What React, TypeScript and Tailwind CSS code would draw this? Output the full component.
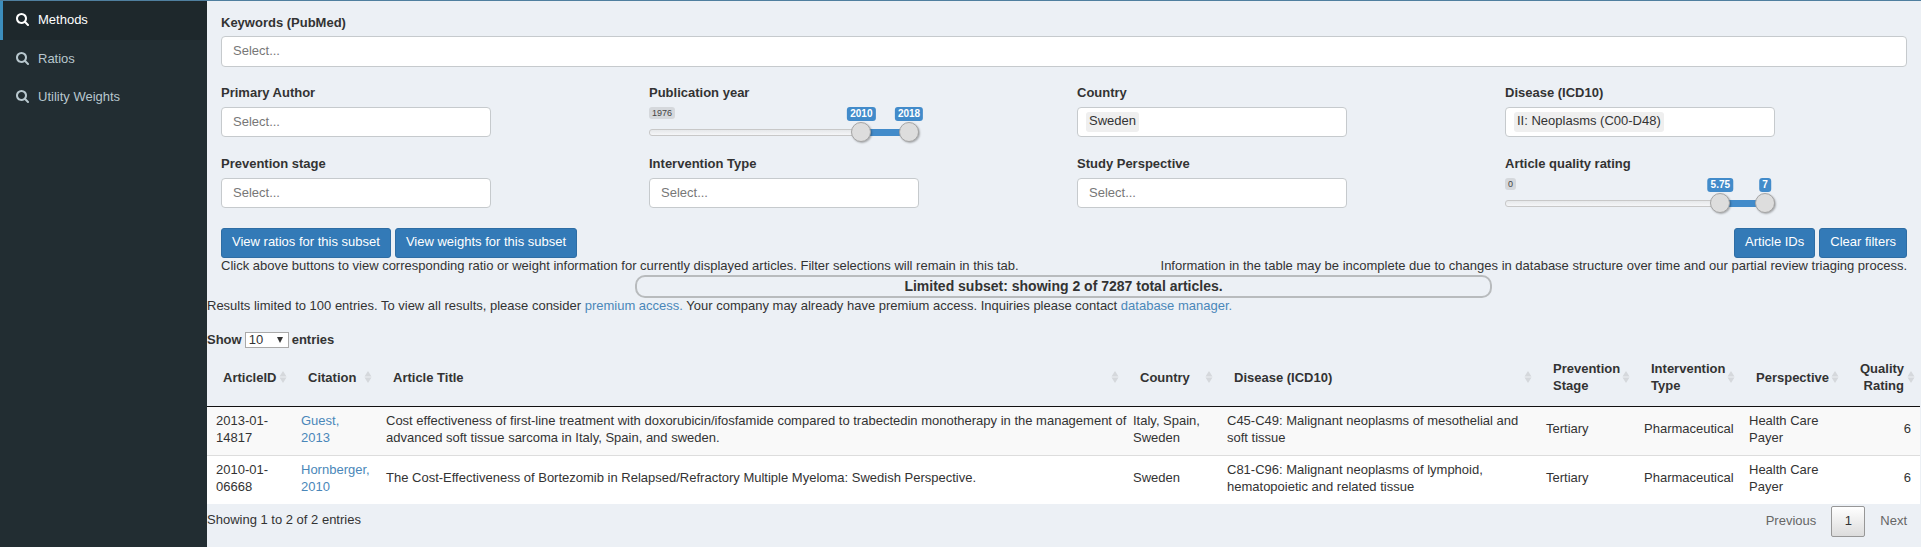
import { useState, type ReactNode } from "react";

function SearchIcon() {
  return (
    <svg viewBox="0 0 1664 1664" className="size-[13px] shrink-0 fill-current" aria-hidden="true">
      <path d="M1152 704q0-185-131.5-316.5T704 256 387.5 387.5 256 704t131.5 316.5T704 1152t316.5-131.5T1152 704zm512 832q0 52-38 90t-90 38q-54 0-90-38l-343-342q-179 124-399 124-143 0-273.5-55.5t-225-150-150-225T0 704t55.5-273.5 150-225 225-150T704 0t273.5 55.5 225 150 150 225T1408 704q0 220-124 399l343 343q37 37 37 90z" />
    </svg>
  );
}

function NavItem({ label, active = false }: { label: string; active?: boolean }) {
  return (
    <li>
      <a
        href="#"
        className={
          active
            ? "flex h-[39px] items-center gap-[9px] border-l-[3px] border-[#3c8dbc] bg-[#1e282c] pb-[2px] pl-[13px] text-white"
            : "flex h-[38px] items-center gap-[9px] border-l-[3px] border-transparent pb-[2px] pl-[13px] text-[#b8c7ce]"
        }
      >
        <SearchIcon />
        {label}
      </a>
    </li>
  );
}

function Field({ id, label, children }: { id: string; label: string; children: ReactNode }) {
  return (
    <div className="px-[14px]">
      <label htmlFor={id} className="mb-[6px] block font-bold">
        {label}
      </label>
      {children}
    </div>
  );
}

function SelectBox({ id, tag }: { id: string; tag?: string }) {
  return (
    <div className="flex h-[30px] w-[270px] items-center rounded-[4px] border border-[#c6cacd] bg-white px-2">
      {tag && <span className="mr-1 shrink-0 rounded-[3px] bg-[#efefef] px-[3px] pb-[2px] leading-[18px]">{tag}</span>}
      <input
        id={id}
        type="text"
        placeholder={tag ? undefined : "Select..."}
        className="w-full min-w-0 bg-transparent pb-[2px] pl-[3px] outline-none placeholder:text-[#777]"
      />
    </div>
  );
}

const thumbInput =
  "pointer-events-none absolute inset-x-0 top-[15px] h-5 w-full appearance-none bg-transparent [&::-webkit-slider-thumb]:pointer-events-auto [&::-webkit-slider-thumb]:size-5 [&::-webkit-slider-thumb]:appearance-none [&::-webkit-slider-thumb]:rounded-full [&::-webkit-slider-thumb]:border [&::-webkit-slider-thumb]:border-[#a6a6a6] [&::-webkit-slider-thumb]:bg-[#dddddd] [&::-webkit-slider-thumb]:shadow-[1px_1px_2px_rgba(0,0,0,0.3)]";
const valueBadge =
  "absolute top-0 -translate-x-1/2 rounded-[3px] bg-[#428bca] px-[3px] text-[10px] leading-[14px] font-bold text-white";

function RangeSlider(props: { id: string; label: string; min: number; max: number; step: number; from: number; to: number }) {
  const { id, label, min, max, step } = props;
  const [from, setFrom] = useState(props.from);
  const [to, setTo] = useState(props.to);
  const at = (v: number) => {
    const r = (v - min) / (max - min);
    return `calc(10px + (100% - 20px) * ${r})`;
  };
  const span = (to - from) / (max - min);
  return (
    <div className="relative h-[30px] w-[270px]">
      <span className="absolute top-0 left-0 rounded-[3px] bg-[#d5d8dc] px-[3px] text-[9px] leading-3 text-[#444]">{min}</span>
      <span className={valueBadge} style={{ left: at(from) }}>{from}</span>
      <span className={valueBadge} style={{ left: at(to) }}>{to}</span>
      <div className="absolute inset-x-0 top-[22px] h-[7px] rounded-[3px] border border-[#c8c8c8] bg-gradient-to-b from-[#e6e8ea] to-[#f5f6f8]" />
      <div
        className="absolute top-[22px] h-[7px] bg-[#428bca]"
        style={{ left: at(from), width: `calc((100% - 20px) * ${span})` }}
      />
      <input
        id={id}
        type="range"
        aria-label={`${label} minimum`}
        min={min}
        max={max}
        step={step}
        value={from}
        onChange={(e) => setFrom(Math.min(Number(e.target.value), to))}
        className={thumbInput}
      />
      <input
        type="range"
        aria-label={`${label} maximum`}
        min={min}
        max={max}
        step={step}
        value={to}
        onChange={(e) => setTo(Math.max(Number(e.target.value), from))}
        className={thumbInput}
      />
    </div>
  );
}

function ActionButton({ children }: { children: ReactNode }) {
  return (
    <button type="button" className="h-[30px] rounded-[3px] border border-[#2e6da4] bg-[#337ab7] px-[10px] pb-1 text-white">
      {children}
    </button>
  );
}

function SortIcon() {
  return (
    <svg viewBox="0 0 8 12" className="absolute top-1/2 right-[5px] h-3 w-2 -translate-y-1/2 fill-[#d5d8dc]" aria-hidden="true">
      <path d="M4 0 7.5 5.5h-7zM4 12 .5 6.5h7z" />
    </svg>
  );
}

const columns: { title: string; width: string; right?: boolean }[] = [
  { title: "ArticleID", width: "w-[85px]" },
  { title: "Citation", width: "w-[85px]" },
  { title: "Article Title", width: "" },
  { title: "Country", width: "w-[94px]" },
  { title: "Disease (ICD10)", width: "w-[319px]" },
  { title: "Prevention Stage", width: "w-[98px]" },
  { title: "Intervention Type", width: "w-[105px]" },
  { title: "Perspective", width: "w-[104px]" },
  { title: "Quality Rating", width: "w-[76px]", right: true },
];

const rows = [
  {
    id: "2013-01-14817",
    citation: "Guest, 2013",
    title:
      "Cost effectiveness of first-line treatment with doxorubicin/ifosfamide compared to trabectedin monotherapy in the management of\nadvanced soft tissue sarcoma in Italy, Spain, and sweden.",
    country: "Italy, Spain, Sweden",
    disease: "C45-C49: Malignant neoplasms of mesothelial and soft tissue",
    rating: 6,
  },
  {
    id: "2010-01-06668",
    citation: "Hornberger, 2010",
    title: "The Cost-Effectiveness of Bortezomib in Relapsed/Refractory Multiple Myeloma: Swedish Perspective.",
    country: "Sweden",
    disease: "C81-C96: Malignant neoplasms of lymphoid, hematopoietic and related tissue",
    rating: 6,
  },
];

function ArticleTable() {
  return (
    <table className="w-full table-fixed border-collapse">
      <thead>
        <tr className="h-[57px] border-b border-[#111]">
          {columns.map((c) => (
            <th
              key={c.title}
              scope="col"
              className={`relative pr-4 pl-4 ${c.right ? "text-right" : "text-left"} ${c.width}`}
            >
              {c.title}
              <SortIcon />
            </th>
          ))}
        </tr>
      </thead>
      <tbody>
        {rows.map((r) => (
          <tr key={r.id} className="border-t border-[#ddd] bg-white first:border-t-0 odd:bg-[#f9f9f9] [&>td]:px-[9px] [&>td]:pt-[5px] [&>td]:pb-[9px]">
            <td>{r.id}</td>
            <td>
              <a href="#" className="text-[#4a87b9]">{r.citation}</a>
            </td>
            <td className="whitespace-pre">{r.title}</td>
            <td>{r.country}</td>
            <td>{r.disease}</td>
            <td>Tertiary</td>
            <td>Pharmaceutical</td>
            <td>Health Care Payer</td>
            <td className="text-right">{r.rating}</td>
          </tr>
        ))}
      </tbody>
    </table>
  );
}

export default function App() {
  return (
    <div className="flex min-h-screen border-t border-[#4f7f9f] bg-[#222d32] font-['Liberation_Sans',Arial,sans-serif] text-[13px] leading-[17px] text-[#333]">
      <nav className="w-[207px] shrink-0">
        <ul>
          <NavItem label="Methods" active />
          <NavItem label="Ratios" />
          <NavItem label="Utility Weights" />
        </ul>
      </nav>
      <main className="min-w-0 flex-1 bg-[#ecf0f5] pt-[13px] pr-px">
        <div className="pr-[13px] pl-[14px]">
          <label htmlFor="keywords" className="mb-[5px] block font-bold">
            Keywords (PubMed)
          </label>
          <input
            id="keywords"
            type="text"
            placeholder="Select..."
            className="block h-[31px] w-full rounded-[4px] border border-[#c6cacd] bg-white px-[11px] pb-[2px] outline-none placeholder:text-[#777]"
          />
        </div>
        <div className="mt-[17px] mr-px grid grid-cols-4 gap-y-[18px]">
          <Field id="author" label="Primary Author"><SelectBox id="author" /></Field>
          <Field id="year" label="Publication year">
            <RangeSlider id="year" label="Publication year" min={1976} max={2018} step={1} from={2010} to={2018} />
          </Field>
          <Field id="country" label="Country"><SelectBox id="country" tag="Sweden" /></Field>
          <Field id="disease" label="Disease (ICD10)"><SelectBox id="disease" tag="II: Neoplasms (C00-D48)" /></Field>
          <Field id="stage" label="Prevention stage"><SelectBox id="stage" /></Field>
          <Field id="intervention" label="Intervention Type"><SelectBox id="intervention" /></Field>
          <Field id="perspective" label="Study Perspective"><SelectBox id="perspective" /></Field>
          <Field id="quality" label="Article quality rating">
            <RangeSlider id="quality" label="Article quality rating" min={0} max={7} step={0.25} from={5.75} to={7} />
          </Field>
        </div>
        <div className="mt-5 flex justify-between pr-[13px] pl-[14px]">
          <div className="flex gap-1">
            <ActionButton>View ratios for this subset</ActionButton>
            <ActionButton>View weights for this subset</ActionButton>
          </div>
          <div className="flex gap-1">
            <ActionButton>Article IDs</ActionButton>
            <ActionButton>Clear filters</ActionButton>
          </div>
        </div>
        <div className="flex justify-between pr-[13px] pb-[2px] pl-[14px] leading-[15px]">
          <p>Click above buttons to view corresponding ratio or weight information for currently displayed articles. Filter selections will remain in this tab.</p>
          <p>Information in the table may be incomplete due to changes in database structure over time and our partial review triaging process.</p>
        </div>
        <p className="mx-auto h-[23px] w-1/2 rounded-[10px] border-2 border-[#b8bbbd] text-center text-sm leading-[18px] font-bold">
          Limited subset: showing 2 of 7287 total articles.
        </p>
        <p className="pb-[2px] leading-[15px]">
          Results limited to 100 entries. To view all results, please consider{" "}
          <a href="#" className="text-[#4a87b9]">premium access.</a> Your company may already have premium access. Inquiries please contact{" "}
          <a href="#" className="text-[#4a87b9]">database manager.</a>
        </p>
        <label className="mt-4 flex h-[18px] items-center gap-[3px] pb-px font-bold">
          Show
          <span className="relative">
            <select className="block h-4 w-[44px] appearance-none border border-[#a9a9a9] bg-white pl-[3px] leading-[14px] font-normal" defaultValue="10">
              <option>10</option>
              <option>25</option>
              <option>50</option>
              <option>100</option>
            </select>
            <svg viewBox="0 0 6 6" className="pointer-events-none absolute top-[5px] right-[6px] size-[6px] fill-[#333]" aria-hidden="true">
              <path d="M0 0h6L3 6z" />
            </svg>
          </span>
          entries
        </label>
        <ArticleTable />
        <div className="flex items-start justify-between pr-[13px]">
          <p className="pt-[7px]">Showing 1 to 2 of 2 entries</p>
          <div className="flex items-center gap-[15px] pt-[2px] text-[#666]">
            <button type="button" className="pb-[2px]">Previous</button>
            <button type="button" className="h-[31px] w-[34px] rounded-[2px] border border-[#979797] bg-gradient-to-b from-white to-[#dcdcdc] pb-[2px] text-[#333]">
              1
            </button>
            <button type="button" className="pb-[2px]">Next</button>
          </div>
        </div>
      </main>
    </div>
  );
}
